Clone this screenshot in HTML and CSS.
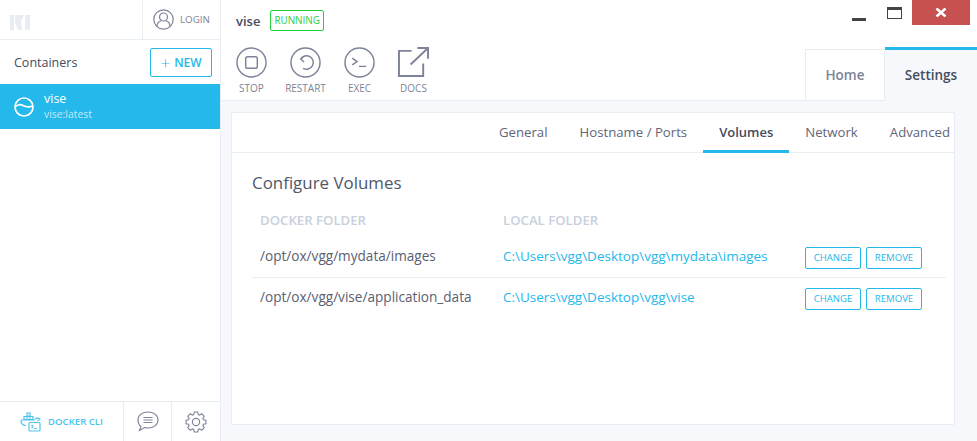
FILE: index.html
```html
<!DOCTYPE html>
<html>
<head>
  <meta charset="utf-8">
  <link rel="stylesheet" href="styles.css">
</head>
<body>
  <div class="app">
    <div class="sidebar">
      <div class="topbar">
        <div class="logo">
          <svg width="20" height="15" viewBox="0 0 20 15"><path fill="#e8ecf3" d="M0 0h4v15H0zM5 0h9l-3 6 1 9H8L5 7zM15 0h5v15h-5z"/></svg>
        </div>
        <div class="login">
          <svg width="21" height="21" viewBox="0 0 21 21" fill="none" stroke="#7d8398" stroke-width="1.2"><circle cx="10.5" cy="10.5" r="9.7"/><circle cx="10.5" cy="8" r="4"/><path d="M4 17.500c0-3.500 2-5 4-5.700M17 17.500c0-3.500-2-5-4-5.700"/></svg>
          <span>LOGIN</span>
        </div>
      </div>
      <div class="list-head">
        <span class="list-title">Containers</span>
        <div class="new-btn"><span class="plus">+</span> NEW</div>
      </div>
      <div class="item">
        <svg width="20" height="20" viewBox="0 0 20 20" fill="none" stroke="#fff" stroke-width="1.7"><circle cx="10" cy="10" r="9"/><path d="M1 10c3-3 5.500-3 8-1.500s5.500 2 10 .5"/></svg>
        <div class="item-text">
          <div class="item-name">vise</div>
          <div class="item-image">vise:latest</div>
        </div>
      </div>
      <div class="side-space"></div>
      <div class="side-foot">
        <div class="cli">
          <svg width="22" height="20" viewBox="0 0 22 20" fill="none" stroke="#4fc3ee" stroke-width="1.2"><path d="M7 1h3v3H7zM4 4.500h3v3H4zM7 4.500h3v3H7zM10 4.500h3v3h-3zM1 8h14M1 8c0 3 1 5.500 5 5.500"/><path d="M15 7c1-1 3-1 5 0-.5 1-1.500 1.500-3 1.500"/><rect x="9" y="10.500" width="11" height="8.500" rx="1" fill="#fff"/><path d="M11.500 13l1.500 1.500-1.500 1.500M14 16.500h3"/></svg>
          <span>DOCKER CLI</span>
        </div>
        <div class="foot-icon chat">
          <svg width="22" height="21" viewBox="0 0 22 21" fill="none" stroke="#7d8398" stroke-width="1.1"><path d="M11 1c5.500 0 10 3 10 8s-4.500 8-10 8c-1.300 0-2.500-.2-3.500-.5L2.500 19.500l1.500-4C2 14 1 11.500 1 9c0-5 4.500-8 10-8z"/><path d="M6.500 6.500h9M6.500 9h9M6.500 11.500h9"/></svg>
        </div>
        <div class="foot-icon gear">
          <svg width="22" height="22" viewBox="0 0 24 24" fill="none" stroke="#7d8398" stroke-width="1.2"><circle cx="12" cy="12" r="4"/><path d="M9.51 3.870L10.090 1.170H13.910L14.490 3.870L15.990 4.490L18.310 2.990L21.010 5.690L19.510 8.010L20.130 9.510L22.830 10.090V13.910L20.130 14.490L19.510 15.990L21.010 18.310L18.310 21.010L15.990 19.510L14.490 20.130L13.910 22.830H10.090L9.510 20.130L8.010 19.510L5.690 21.010L2.990 18.310L4.490 15.990L3.870 14.490L1.170 13.910V10.090L3.870 9.510L4.490 8.010L2.990 5.690L5.690 2.990L8.010 4.490Z"/></svg>
        </div>
      </div>
    </div>
    <div class="main">
      <div class="header">
        <div class="header-left">
          <div class="title-row">
            <span class="title">vise</span>
            <span class="badge">RUNNING</span>
          </div>
          <div class="actions">
            <div class="action">
              <svg width="31" height="31" viewBox="0 0 32 32" fill="none" stroke="#7d8398" stroke-width="1.5"><circle cx="16" cy="16" r="15"/><rect x="10" y="10" width="12" height="12" rx="2"/></svg>
              <span>STOP</span>
            </div>
            <div class="action">
              <svg width="31" height="31" viewBox="0 0 32 32" fill="none" stroke="#7d8398" stroke-width="1.5"><circle cx="16" cy="16" r="15"/><path d="M11 12.500a7 7 0 1 1 2.500 9.500M14.500 9.500l-3.500 3 3.500 3"/></svg>
              <span>RESTART</span>
            </div>
            <div class="action">
              <svg width="31" height="31" viewBox="0 0 32 32" fill="none" stroke="#7d8398" stroke-width="1.5"><circle cx="16" cy="16" r="15"/><path d="M8.500 11.500l5 3.500-5 3.500M15.500 20h7.500"/></svg>
              <span>EXEC</span>
            </div>
            <div class="action">
              <svg width="31" height="31" viewBox="0 0 32 32" fill="none" stroke="#7d8398" stroke-width="2"><path d="M14 4H1v26h25V17M13 18L31 1M20 1h11v11"/></svg>
              <span>DOCS</span>
            </div>
          </div>
        </div>
        <div class="header-right">
          <div class="win-bar">
            <span class="win-min"></span>
            <span class="win-max"></span>
            <span class="win-close">
              <svg width="12" height="9" viewBox="0 0 12 9" stroke="#fff" stroke-width="2.6"><path d="M1.500 .5l9 8M10.500 .5l-9 8"/></svg>
            </span>
          </div>
          <div class="main-tabs">
            <div class="main-tab">Home</div>
            <div class="main-tab on">Settings</div>
          </div>
        </div>
      </div>
      <div class="body">
        <div class="card">
          <div class="tabs">
            <div class="tab">General</div>
            <div class="tab">Hostname / Ports</div>
            <div class="tab on">Volumes</div>
            <div class="tab">Network</div>
            <div class="tab last">Advanced</div>
          </div>
          <div class="panel">
            <h2>Configure Volumes</h2>
            <div class="cols">
              <div class="col-docker">DOCKER FOLDER</div>
              <div class="col-local">LOCAL FOLDER</div>
            </div>
            <div class="vol">
              <div class="col-docker">/opt/ox/vgg/mydata/images</div>
              <div class="col-local"><span class="link">C:\Users\vgg\Desktop\vgg\mydata\images</span></div>
              <div class="btns"><span class="btn">CHANGE</span><span class="btn">REMOVE</span></div>
            </div>
            <div class="vol">
              <div class="col-docker">/opt/ox/vgg/vise/application_data</div>
              <div class="col-local"><span class="link">C:\Users\vgg\Desktop\vgg\vise</span></div>
              <div class="btns"><span class="btn">CHANGE</span><span class="btn">REMOVE</span></div>
            </div>
          </div>
        </div>
      </div>
    </div>
  </div>
</body>
</html>
```
FILE: styles.css
```css
* {
  box-sizing: border-box;
}

body {
  margin: 0;
  font-family: "Open Sans", "Noto Sans", sans-serif;
  color: #444c5e;
  background: #fff;
}

.app {
  display: flex;
  width: 977px;
  height: 441px;
  overflow: hidden;
}

/* left column */
.sidebar {
  width: 221px;
  flex: none;
  display: flex;
  flex-direction: column;
  border-right: 1px solid #e8ecf3;
}

.topbar {
  height: 40px;
  display: flex;
  border-bottom: 1px solid #e8ecf3;
}

.logo {
  width: 142px;
  padding: 13px 0 0 10px;
}

.login {
  flex: 1;
  display: flex;
  align-items: center;
  gap: 6px;
  padding-left: 10px;
  border-left: 1px solid #e8ecf3;
  font-size: 9.8px;
  color: #7d8398;
}

.list-head {
  height: 44px;
  display: flex;
  align-items: center;
  justify-content: space-between;
  padding: 0 8px 0 14px;
}

.list-title {
  font-size: 12.5px;
}

.new-btn {
  width: 62px;
  height: 29px;
  border: 1px solid #24b8eb;
  border-radius: 2px;
  color: #24b8eb;
  font-size: 12px;
  font-weight: 600;
  display: flex;
  align-items: center;
  justify-content: center;
  gap: 4px;
}

.plus {
  font-size: 17px;
  font-weight: 300;
  line-height: 1;
}

.item {
  height: 45px;
  background: #24b8eb;
  color: #fff;
  display: flex;
  align-items: center;
  gap: 10px;
  padding-left: 14px;
}

.item-name {
  font-size: 12.5px;
  line-height: 16px;
}

.item-image {
  font-size: 10.4px;
  line-height: 15px;
  color: #c3eafa;
}

.side-space {
  flex: 1;
}

.side-foot {
  height: 40px;
  display: flex;
  border-top: 1px solid #e8ecf3;
}

.cli {
  width: 123px;
  display: flex;
  align-items: center;
  gap: 6px;
  padding-left: 20px;
  font-size: 9.6px;
  font-weight: 600;
  color: #4fc3ee;
  white-space: nowrap;
}

.foot-icon {
  width: 48px;
  display: flex;
  align-items: center;
  justify-content: center;
  border-left: 1px solid #e8ecf3;
}

/* right column */
.main {
  flex: 1;
  display: flex;
  flex-direction: column;
  min-width: 0;
}

.header {
  height: 101px;
  display: flex;
  justify-content: space-between;
  border-bottom: 1px solid #e8ecf3;
}

.header-left {
  padding: 10px 0 0 15px;
}

.title-row {
  display: flex;
  align-items: center;
  gap: 10px;
  height: 21px;
}

.title {
  font-size: 13px;
  font-weight: 600;
}

.badge {
  height: 21px;
  padding: 0 3px;
  border: 1px solid #1fd13f;
  border-radius: 2px;
  font-size: 9.9px;
  line-height: 19px;
  color: #1fd13f;
}

.actions {
  display: flex;
  gap: 23px;
  margin-top: 16px;
}

.action {
  width: 31px;
  display: flex;
  flex-direction: column;
  align-items: center;
  font-size: 10px;
  color: #7d8398;
  white-space: nowrap;
}

.action span {
  margin-top: 4px;
  line-height: 13px;
}

.header-right {
  width: 172px;
  display: flex;
  flex-direction: column;
  align-items: flex-end;
}

.win-bar {
  height: 25px;
  display: flex;
  align-items: flex-start;
  padding-right: 7px;
}

.win-min {
  width: 14px;
  height: 3px;
  margin: 18px 21px 0 0;
  background: #444;
}

.win-max {
  width: 15px;
  height: 12px;
  margin: 7px 10px 0 0;
  border: 1px solid #444;
  border-top-width: 3px;
}

.win-close {
  width: 58px;
  height: 25px;
  background: #c75050;
  display: flex;
  justify-content: center;
  padding-top: 8px;
}

.main-tabs {
  display: flex;
  margin-top: 22px;
  height: 54px;
}

.main-tab {
  width: 80px;
  height: 52px;
  margin-top: 2px;
  border: 1px solid #e8ecf3;
  border-bottom: none;
  font-size: 13.5px;
  font-weight: 600;
  color: #7d8398;
  text-align: center;
  line-height: 50px;
}

.main-tab.on {
  width: 92px;
  height: 54px;
  margin-top: 0;
  border: none;
  border-top: 3px solid #24b8eb;
  background: #f7f8fb;
  color: #444c5e;
  line-height: 50px;
}

.body {
  flex: 1;
  background: #f7f8fb;
  padding: 11px 22px 16px 10px;
}

.card {
  height: 313px;
  background: #fff;
  border: 1px solid #e8ecf3;
  border-radius: 2px;
}

.tabs {
  height: 40px;
  display: flex;
  justify-content: flex-end;
  border-bottom: 1px solid #e8ecf3;
  font-size: 13.2px;
  color: #5f667a;
}

.tab {
  height: 40px;
  line-height: 39px;
  padding: 0 16px;
}

.tab.last {
  padding-right: 4px;
}

.tab.on {
  color: #444c5e;
  font-size: 13px;
  font-weight: 600;
  border-bottom: 3px solid #24b8eb;
}

.panel {
  padding: 19px 8px 0 20px;
}

.panel h2 {
  margin: 0;
  font-size: 16.9px;
  font-weight: 400;
  line-height: 22px;
  color: #505769;
}

.cols {
  display: flex;
  margin-top: 17px;
  padding-left: 8px;
  font-size: 13.2px;
  font-weight: 600;
  color: #c8d0dc;
  line-height: 18px;
}

.col-docker {
  width: 243px;
  flex: none;
}

.col-local {
  width: 302px;
  flex: none;
}

.vol {
  display: flex;
  align-items: center;
  height: 40px;
  padding-left: 8px;
  font-size: 13.6px;
  color: #5a6072;
}

.vol .col-docker,
.vol .col-local {
  margin-top: -4px;
}

.cols + .vol {
  margin-top: 9px;
  border-bottom: 1px solid #e8ecf3;
}

.link {
  color: #24b8eb;
  font-size: 13.5px;
}

.btns {
  display: flex;
  gap: 5px;
  margin-top: 1px;
}

.btn {
  width: 56px;
  height: 22px;
  border: 1px solid #24b8eb;
  border-radius: 2px;
  color: #24b8eb;
  font-size: 9.6px;
  line-height: 20px;
  text-align: center;
}
```
